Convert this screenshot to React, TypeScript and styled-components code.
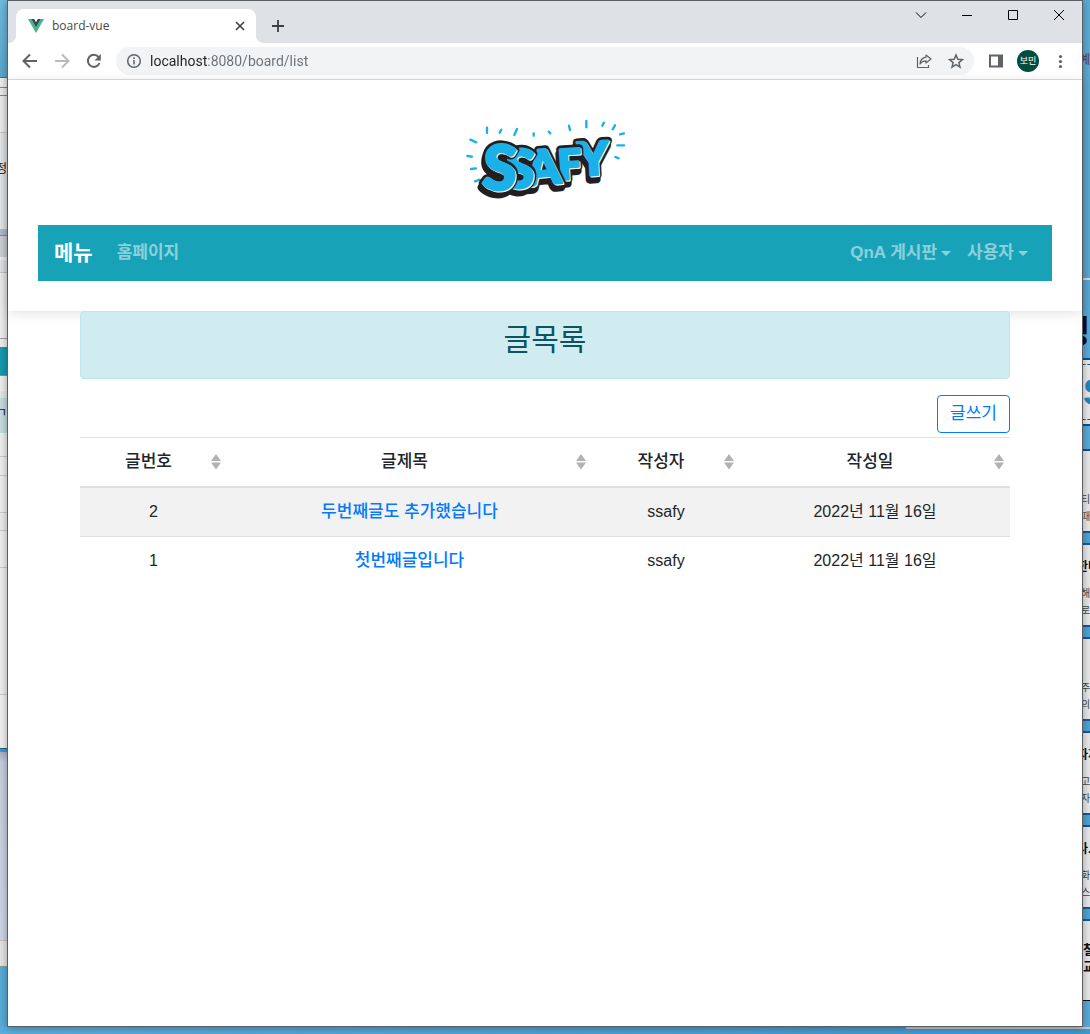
import React from "react";
import styled, { createGlobalStyle, css } from "styled-components";

const GlobalStyle = createGlobalStyle`
  *, *::before, *::after { box-sizing: border-box; }
  body {
    margin: 0;
    background: #4b9fd2;
    color: #212529;
    font-family: "Liberation Sans", "Noto Sans CJK KR", sans-serif;
    font-size: 16px;
    line-height: 24px;
  }
  button, input { font: inherit; }
  a { text-decoration: none; }
  svg { display: block; }
`;

/* ---------- desktop ---------- */

const Desktop = styled.div`
  display: grid;
  grid-template-columns: 7px minmax(0, 1fr) 7px;
  grid-template-rows: minmax(0, 1fr) 7px;
  height: 100vh;
  overflow: hidden;
`;

const Strip = styled.div`
  display: flex;
  flex-direction: column;
  min-width: 0;
  overflow: hidden;
  background: #58abd8;
`;

const Band = styled.div<{ $h: number; $bg: string; $line?: string }>`
  flex: none;
  height: ${(p) => p.$h}px;
  overflow: hidden;
  background: ${(p) => p.$bg};
  ${(p) => p.$line && css`border-bottom: 1px solid ${p.$line};`}
`;

const BandText = styled.div<{ $size: number; $top: number; $color?: string; $end?: boolean }>`
  display: flex;
  justify-content: ${(p) => (p.$end ? "flex-end" : "flex-start")};
  padding-top: ${(p) => p.$top}px;
  font-size: ${(p) => p.$size}px;
  line-height: ${(p) => p.$size}px;
  font-weight: ${(p) => (p.$size > 12 ? 700 : 400)};
  color: ${(p) => p.$color ?? "#111"};
  white-space: nowrap;
`;

const Card = styled.div`
  flex: none;
  height: 94px;
  padding-top: 12px;
  overflow: hidden;
  background: #e8e8e8;
  border-bottom: 2px solid #16589c;
  box-shadow: inset 0 -10px 0 #4da3d6, inset 0 -12px 0 #16589c;
`;

const CardTitle = styled.div`
  height: 20px;
  margin-bottom: 8px;
  font-size: 12px;
  line-height: 20px;
  font-weight: 700;
  color: #111;
  white-space: nowrap;
  text-indent: -6px;
`;

const CardLine = styled.div`
  height: 17px;
  font-size: 10px;
  line-height: 17px;
  color: #444;
  white-space: nowrap;
  text-indent: -2px;
`;

const DashedBox = styled.div`
  flex: none;
  height: 68px;
  padding: 4px 0;
  background: #e9e9e9;
  border-top: 2px solid #124d91;
  border-bottom: 2px solid #124d91;
`;

const DashedInner = styled.div`
  height: 56px;
  border-top: 1px dashed #124d91;
  border-bottom: 1px dashed #124d91;
  overflow: hidden;
`;

const Taskline = styled.div`
  grid-column: 1 / -1;
  display: flex;
  justify-content: flex-end;
  background: linear-gradient(90deg, #5aaede, #4197cd);
`;

const TasklineEdge = styled.div`
  width: 184px;
  height: 2px;
  background: #c3c5c6;
`;

const Window = styled.div`
  position: relative;
  display: flex;
  flex-direction: column;
  border: 1px solid #5b5e63;
  background: #fff;
  box-shadow: 0 1px 8px rgba(0, 0, 0, 0.35);
`;

/* ---------- browser frame ---------- */

const TabBar = styled.div`
  display: flex;
  justify-content: space-between;
  height: 42px;
  padding-left: 8px;
  background: #dee1e6;
  font-family: "Open Sans", "Noto Sans CJK KR", sans-serif;
`;

const TabGroup = styled.div`
  display: flex;
  align-items: flex-end;
  gap: 8px;
`;

const Tab = styled.div`
  position: relative;
  display: flex;
  align-items: center;
  gap: 8px;
  width: 240px;
  height: 34px;
  padding: 0 8px 0 12px;
  border-radius: 8px 8px 0 0;
  background: #fff;
  &::before, &::after {
    content: "";
    position: absolute;
    bottom: 0;
    width: 8px;
    height: 8px;
  }
  &::before { left: -8px; background: radial-gradient(circle at 0 0, #dee1e6 8px, #fff 8px); }
  &::after { right: -8px; background: radial-gradient(circle at 100% 0, #dee1e6 8px, #fff 8px); }
`;

const TabTitle = styled.span`
  flex: 1;
  font-size: 12px;
  line-height: 16px;
  color: #45494d;
`;

const PlainButton = styled.button`
  display: flex;
  align-items: center;
  justify-content: center;
  padding: 0;
  border: 0;
  background: none;
  color: inherit;
  cursor: pointer;
`;

const TabButton = styled(PlainButton)`
  width: 16px;
  height: 16px;
  color: #3c4043;
`;

const NewTabButton = styled(PlainButton)`
  width: 28px;
  height: 34px;
  color: #3c4043;
`;

const WindowControls = styled.div`
  display: flex;
`;

const ControlButton = styled(PlainButton)`
  width: 46px;
  height: 28px;
  color: #000;
`;

const Toolbar = styled.div`
  display: flex;
  align-items: center;
  gap: 4px;
  height: 37px;
  padding: 0 8px;
  border-bottom: 1px solid #dadce0;
  background: #fff;
`;

const ToolButton = styled(PlainButton)<{ $faded?: boolean }>`
  flex: none;
  width: 28px;
  height: 28px;
  color: ${(p) => (p.$faded ? "#bababa" : "#5f6368")};
`;

const Omnibox = styled.div`
  flex: 1;
  display: flex;
  align-items: center;
  gap: 4px;
  height: 28px;
  margin: 0 4px;
  padding: 0 4px;
  border-radius: 14px;
  background: #f1f3f4;
`;

const UrlInput = styled.input`
  flex: 1;
  min-width: 0;
  height: 20px;
  margin-left: -2px;
  padding: 0;
  border: 0;
  outline: 0;
  background: linear-gradient(90deg, #202124 58px, #6b7075 58px);
  background-clip: text;
  -webkit-background-clip: text;
  color: transparent;
  font-family: Roboto, sans-serif;
  font-size: 14px;
  line-height: 20px;
`;

const Avatar = styled.span`
  display: flex;
  align-items: center;
  justify-content: center;
  width: 22px;
  height: 22px;
  border-radius: 50%;
  background: #004d40;
  color: #fff;
  font-size: 9px;
  line-height: 12px;
`;

/* ---------- page ---------- */

const PageHeader = styled.header`
  padding: 30px;
  box-shadow: 0 2px 12px rgba(0, 0, 0, 0.12);
`;

const LogoLink = styled.a`
  display: flex;
  justify-content: center;
  height: 115px;
`;

const NavBar = styled.nav`
  display: flex;
  align-items: center;
  padding: 8px 16px;
  background: #17a2b8;
  font-weight: 700;
`;

const Brand = styled.a`
  margin-right: 16px;
  color: #fff;
  font-size: 21px;
  line-height: 40px;
`;

const navItem = css`
  padding: 8px;
  color: rgba(255, 255, 255, 0.5);
  font-size: 17px;
  line-height: 24px;
  font-weight: 700;
`;

const NavLink = styled.a`
  ${navItem}
`;

const NavMenus = styled.div`
  display: flex;
  margin-left: auto;
`;

const NavToggle = styled(PlainButton)`
  ${navItem}
  gap: 4px;
  &::after {
    content: "";
    border: 5px solid transparent;
    border-top-color: currentColor;
    border-bottom: 0;
  }
`;

const Container = styled.main`
  position: relative;
  width: 100%;
  max-width: 960px;
  margin: 0 auto;
  padding: 0 15px;
`;

const Alert = styled.div`
  padding: 12px 20px;
  border: 1px solid #bee5eb;
  border-radius: 4px;
  background: #d1ecf1;
  color: #0c5460;
  text-align: center;
`;

const Title = styled.h3`
  margin: 0 0 10px;
  font-size: 30px;
  line-height: 32px;
  font-weight: 400;
`;

const Actions = styled.div`
  display: flex;
  justify-content: flex-end;
  padding: 16px 0 4px;
`;

const WriteButton = styled.button`
  padding: 6px 12px;
  border: 1px solid #007bff;
  border-radius: 4px;
  background: #fff;
  color: #007bff;
  font-size: 17px;
  line-height: 24px;
  cursor: pointer;
`;

const Table = styled.table`
  width: 100%;
  table-layout: fixed;
  border-collapse: collapse;
  text-align: center;
`;

const Col = styled.col<{ $w?: number }>`
  width: ${(p) => (p.$w ? `${p.$w}px` : "auto")};
`;

const HeadCell = styled.th`
  padding: 0;
  border-top: 1px solid #dee2e6;
  border-bottom: 2px solid #dee2e6;
`;

const SortButton = styled.button`
  display: grid;
  grid-template-columns: 1fr 10px;
  align-items: center;
  gap: 6px;
  width: 100%;
  padding: 12px 6px 12px 12px;
  border: 0;
  background: none;
  color: #212529;
  font-size: 17px;
  line-height: 24px;
  font-weight: 500;
  cursor: pointer;
`;

const Row = styled.tr`
  &:nth-of-type(odd) { background: #f2f2f2; }
`;

const Cell = styled.td`
  padding: 12px;
  border-top: 1px solid #dee2e6;
  line-height: 24px;
`;

const PostLink = styled.a`
  color: #007bff;
  font-size: 17px;
  font-weight: 500;
`;

/* ---------- drawings ---------- */

const VueLogo = () => (
  <svg width="16" height="16" viewBox="0 0 16 16" aria-hidden="true">
    <path d="M0 1h3.2L8 9.4 12.8 1H16L8 15z" fill="#41b883" />
    <path d="M3.200 1h3L8 4.200 9.800 1h3L8 9.400z" fill="#35495e" />
  </svg>
);

const SortIcon = () => (
  <svg width="10" height="16" viewBox="0 0 10 16" fill="#b2b2b2" aria-hidden="true">
    <path d="M0 7 5 0l5 7z M0 8.500h10l-5 7z" />
  </svg>
);

/* listed back to front: each letter overlaps the one on its right */
const letters = [
  { ch: "Y", x: 432, y: 210, size: 138, turn: -3 },
  { ch: "F", x: 362, y: 222, size: 124, turn: -4 },
  { ch: "A", x: 284, y: 238, size: 144, turn: -5 },
  { ch: "S", x: 206, y: 248, size: 160, turn: 4 },
  { ch: "S", x: 145, y: 254, size: 186, turn: 4 },
];

const rays = [
  "M111 68v16", "M154 74l-5 9", "M201 72l-8 18", "M251 85v7", "M296 80l5 5", "M357 62l3 13",
  "M409 48v19", "M462 53l-5 9", "M495 61l-7 12", "M510 88l12-3", "M502 121h20", "M496 156l10 4",
  "M61 104l18 8", "M52 153l14 2", "M63 192l15-2", "M75 229l14-5",
];

type Glyph = (typeof letters)[number];

const Letter = ({ l, fill, width, dx = 0, dy = 0 }: { l: Glyph; fill: string; width: number; dx?: number; dy?: number }) => (
  <text
    x={l.x + dx}
    y={l.y + dy}
    fontSize={l.size}
    fill={fill}
    stroke={fill}
    strokeWidth={width}
    transform={`rotate(${l.turn} ${l.x} ${l.y})`}
  >
    {l.ch}
  </text>
);

const SsafyLogo = () => (
  <svg width="190" height="115" viewBox="0 15 570 345" role="img" aria-label="SSAFY">
    <g stroke="#1cb0e8" strokeWidth="7" strokeLinecap="round" fill="none">
      {rays.map((d) => (
        <path key={d} d={d} />
      ))}
    </g>
    <g strokeLinejoin="round" fontFamily="Lato, sans-serif" fontWeight="900" textAnchor="middle">
      {letters.map((l, i) => <Letter key={i} l={l} fill="#231f20" width={24} dx={-3} dy={13} />)}
      {letters.map((l, i) => (
        <React.Fragment key={i}>
          <Letter l={l} fill="#231f20" width={24} />
          <Letter l={l} fill="#ffffff" width={8} dx={3} dy={3} />
          <Letter l={l} fill="#1cb0e8" width={8} />
        </React.Fragment>
      ))}
    </g>
  </svg>
);

const Icon = ({ children, size = 16, width = 2 }: { children: React.ReactNode; size?: number; width?: number }) => (
  <svg width={size} height={size} viewBox="0 0 16 16" fill="none" stroke="currentColor" strokeWidth={width} aria-hidden="true">
    {children}
  </svg>
);

/* ---------- data ---------- */

const columns = [
  { label: "글번호", width: 147 },
  { label: "글제목" },
  { label: "작성자", width: 148 },
  { label: "작성일", width: 270 },
];

const posts = [
  { no: 2, title: "두번째글도 추가했습니다", writer: "ssafy", date: "2022년 11월 16일" },
  { no: 1, title: "첫번째글입니다", writer: "ssafy", date: "2022년 11월 16일" },
];

const leftBands: { h: number; bg: string; line?: string; text?: string; top?: number; size?: number }[] = [
  { h: 78, bg: "linear-gradient(#6fbadd, #5ba6cc)", line: "#3f748f" },
  { h: 10, bg: "#eeeeee", line: "#888888" },
  { h: 8, bg: "#eeeeee", line: "#888888" },
  { h: 37, bg: "#eeeeee", line: "#cccccc" },
  { h: 96, bg: "#e5e7e9", text: "정", top: 30, size: 12 },
  { h: 7, bg: "#b3bbd0", line: "#8a8c92" },
  { h: 21, bg: "#cfd1d8" },
  { h: 3, bg: "#efefed" },
  { h: 13, bg: "#e1e3e6", line: "#c2c3c5" },
  { h: 66, bg: "#eeeeee", line: "#a0a0a0" },
  { h: 8, bg: "#eeeeee" },
  { h: 29, bg: "#1799ae", line: "#5c9fa9" },
  { h: 15, bg: "#eeeeee" },
  { h: 7, bg: "#e6e6e6" },
  { h: 35, bg: "#c5dce0", text: "ㄱ", top: 9, size: 12 },
  { h: 24, bg: "#eeeeee", line: "#cccccc" },
  { h: 19, bg: "#eeeeee", line: "#cccccc" },
  { h: 37, bg: "#eeeeee", line: "#cccccc" },
  { h: 18, bg: "#ebebeb", line: "#cccccc" },
  { h: 37, bg: "#eeeeee", line: "#cccccc" },
  { h: 127, bg: "#eeeeee", line: "#cccccc" },
  { h: 54, bg: "#f0f0f0", line: "#1c5f86" },
  { h: 3, bg: "#4497c4" },
  { h: 189, bg: "linear-gradient(#a5b2c4, #c6cfdf 10px, #cdd6e6)", line: "#c0c0c0" },
  { h: 26, bg: "#e4e4e4", line: "#8a9ba5" },
];

const cards = [
  { title: "", lines: ["티", "때 미"] },
  { title: "한머", lines: ["해하", "로"] },
  { title: "", lines: ["주", "의"] },
  { title: "자지", lines: ["고 목", "자지"] },
  { title: "다.", lines: ["화를", "스"] },
];

export default function App() {
  return (
    <>
      <GlobalStyle />
      <Desktop>
        <Strip aria-hidden="true">
          {leftBands.map((b, i) => (
            <Band key={i} $h={b.h} $bg={b.bg} $line={b.line}>
              {b.text && <BandText $size={b.size ?? 12} $top={b.top ?? 0} $end>{b.text}</BandText>}
            </Band>
          ))}
        </Strip>

        <Window>
          <TabBar>
            <TabGroup>
              <Tab>
                <VueLogo />
                <TabTitle>board-vue</TabTitle>
                <TabButton aria-label="탭 닫기">
                  <Icon width={1.6}><path d="M4 4l8 8M12 4l-8 8" /></Icon>
                </TabButton>
              </Tab>
              <NewTabButton aria-label="새 탭">
                <Icon width={1.8}><path d="M8 2v12M2 8h12" /></Icon>
              </NewTabButton>
            </TabGroup>
            <WindowControls>
              <ControlButton aria-label="탭 검색"><Icon width={1}><path d="M3 5.500l5 5 5-5" /></Icon></ControlButton>
              <ControlButton aria-label="최소화"><Icon width={1}><path d="M3 8.500h10" /></Icon></ControlButton>
              <ControlButton aria-label="최대화"><Icon width={1}><path d="M3.500 3.500h9v9h-9z" /></Icon></ControlButton>
              <ControlButton aria-label="닫기"><Icon width={1}><path d="M3 3l10 10M13 3L3 13" /></Icon></ControlButton>
            </WindowControls>
          </TabBar>

          <Toolbar>
            <ToolButton aria-label="뒤로"><Icon><path d="M15 8H2M8 1.500L1.500 8 8 14.500" /></Icon></ToolButton>
            <ToolButton aria-label="앞으로" $faded><Icon><path d="M1 8h13M8 1.500L14.500 8 8 14.500" /></Icon></ToolButton>
            <ToolButton aria-label="새로고침">
              <Icon><path d="M13.500 10A6 6 0 1 1 12.500 4" /><path d="M14.800 1v6.500H8.500z" fill="currentColor" stroke="none" /></Icon>
            </ToolButton>
            <Omnibox>
              <ToolButton aria-label="사이트 정보">
                <Icon width={1.5}><circle cx="8" cy="8" r="6.300" /><path d="M8 7v4.500M8 4.300v1.600" /></Icon>
              </ToolButton>
              <UrlInput aria-label="주소" defaultValue="localhost:8080/board/list" />
              <ToolButton aria-label="공유">
                <Icon width={1.2}>
                  <path d="M1.500 4v10.500h11v-2.500" />
                  <path d="M10 2l5 4-5 4V7.800C7.200 7.800 5.300 8.800 4 11c.3-3.800 2.500-6.300 6-6.800z" strokeLinejoin="round" />
                </Icon>
              </ToolButton>
              <ToolButton aria-label="북마크">
                <Icon width={1.5}><path d="M8 2l1.800 4.200 4.600.4-3.500 3 1.100 4.500L8 11.700l-4 2.400 1.100-4.500-3.500-3 4.600-.4z" /></Icon>
              </ToolButton>
            </Omnibox>
            <ToolButton aria-label="측면 패널">
              <Icon><path d="M2 2.500h12v11H2z" /><path d="M10 2h5v12h-5z" fill="currentColor" stroke="none" /></Icon>
            </ToolButton>
            <ToolButton aria-label="프로필"><Avatar>보민</Avatar></ToolButton>
            <ToolButton aria-label="더보기">
              <svg width="16" height="16" viewBox="0 0 16 16" fill="currentColor" aria-hidden="true">
                <circle cx="8.500" cy="3.500" r="1.600" /><circle cx="8.500" cy="8.500" r="1.600" /><circle cx="8.500" cy="13.500" r="1.600" />
              </svg>
            </ToolButton>
          </Toolbar>

          <PageHeader>
            <LogoLink href="/" aria-label="SSAFY"><SsafyLogo /></LogoLink>
            <NavBar>
              <Brand href="/">메뉴</Brand>
              <NavLink href="/">홈페이지</NavLink>
              <NavMenus>
                <NavToggle aria-haspopup="menu">QnA 게시판</NavToggle>
                <NavToggle aria-haspopup="menu">사용자</NavToggle>
              </NavMenus>
            </NavBar>
          </PageHeader>

          <Container>
            <Alert><Title>글목록</Title></Alert>
            <Actions><WriteButton>글쓰기</WriteButton></Actions>
            <Table>
              <colgroup>{columns.map((c) => <Col key={c.label} $w={c.width} />)}</colgroup>
              <thead>
                <tr>
                  {columns.map((c) => (
                    <HeadCell key={c.label} scope="col">
                      <SortButton><span>{c.label}</span><SortIcon /></SortButton>
                    </HeadCell>
                  ))}
                </tr>
              </thead>
              <tbody>
                {posts.map((p) => (
                  <Row key={p.no}>
                    <Cell>{p.no}</Cell>
                    <Cell><PostLink href={`/board/view/${p.no}`}>{p.title}</PostLink></Cell>
                    <Cell>{p.writer}</Cell>
                    <Cell>{p.date}</Cell>
                  </Row>
                ))}
              </tbody>
            </Table>
          </Container>
        </Window>

        <Strip aria-hidden="true">
          <Band $h={278} $bg="#5cabd5"><BandText $size={12} $top={54} $color="#5a3c28" $end>예</BandText></Band>
          <Band $h={2} $bg="#dddddd" />
          <Band $h={78} $bg="#58aad8"><BandText $size={32} $top={36} $end>정</BandText></Band>
          <DashedBox>
            <DashedInner><BandText $size={36} $top={10} $color="#1e88c0">S</BandText></DashedInner>
          </DashedBox>
          <Band $h={23} $bg="#58aad8" />
          <Band $h={2} $bg="#124d91" />
          {cards.map((c, i) => (
            <Card key={i}>
              <CardTitle>{c.title}</CardTitle>
              {c.lines.map((l) => <CardLine key={l}>{l}</CardLine>)}
            </Card>
          ))}
          <Band $h={80} $bg="#e8e8e8" $line="#111111">
            <BandText $size={13} $top={22}>철</BandText>
            <BandText $size={13} $top={4}>교</BandText>
          </Band>
        </Strip>

        <Taskline aria-hidden="true"><TasklineEdge /></Taskline>
      </Desktop>
    </>
  );
}
